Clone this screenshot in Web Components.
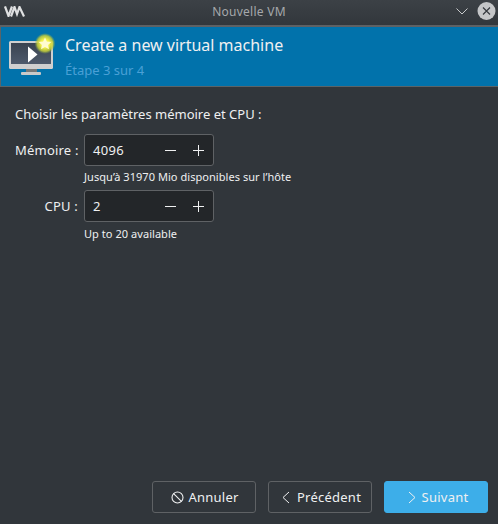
<!DOCTYPE html>
<html><head><meta charset="utf-8"><style>
html,body{margin:0;padding:0;background:#31363b}
body{width:498px;height:524px;overflow:hidden;font:13px "Noto Sans",sans-serif;color:#eff0f1}
</style></head><body>
<vm-window>
  <vm-titlebar slot="title">Nouvelle VM</vm-titlebar>
  <vm-banner slot="banner" heading="Create a new virtual machine" sub="Étape 3 sur 4"></vm-banner>
  <vm-form slot="body"></vm-form>
  <vm-button slot="footer" icon="cancel">Annuler</vm-button>
  <vm-button slot="footer" icon="prev">Précédent</vm-button>
  <vm-button slot="footer" icon="next" primary>Suivant</vm-button>
</vm-window>
<script>
function def(name, html){
  customElements.define(name, class extends HTMLElement{
    connectedCallback(){
      if(this.shadowRoot) return;
      const r=this.attachShadow({mode:'open'});
      r.innerHTML= typeof html==='function'? html(this): html;
    }
  });
}
def('vm-window',`<style>
:host{display:flex;flex-direction:column;width:498px;height:524px;box-sizing:border-box}
.body{flex:1;display:flex;flex-direction:column}
.foot{display:flex;justify-content:flex-end;gap:12px;padding:0 10px 11px 0}
</style><slot name="title"></slot><slot name="banner"></slot><div class="body"><slot name="body"></slot></div><div class="foot"><slot name="footer"></slot></div>`);

def('vm-titlebar',`<style>
:host{display:flex;align-items:center;justify-content:center;position:relative;height:26px;box-sizing:border-box;
background:linear-gradient(#3c4146,#32373c);border-bottom:1px solid #5e6164;color:#a5a8ab;font-size:12px;letter-spacing:.25px}
.logo{position:absolute;left:4px;top:6px}
.ctl{position:absolute;right:2px;top:2px;display:flex;align-items:center;gap:9px}
.t{position:relative;top:-1px}
</style>
<svg class="logo" width="21" height="11" viewBox="0 0 21 11" fill="none" stroke="#dfe0e1" stroke-width="2.200">
<path d="M1 .5l3.500 9.500L8 .5"/><path d="M7 10.500L10.500 1 13 8 15.500 1 20 10.500"/></svg>
<span class="t"><slot></slot></span>
<span class="ctl">
<svg width="12" height="7" viewBox="0 0 12 7" fill="none" stroke="#c8cacc" stroke-width="1"><path d="M.5 .5l5.500 5.500 5.500-5.500"/></svg>
<svg width="19" height="18" viewBox="0 0 19 18"><circle cx="9.500" cy="9" r="9" fill="#c4c6c8"/><path d="M6 5.500l7 7M13 5.500l-7 7" stroke="#34393e" stroke-width="1.200"/></svg>
</span>`);

def('vm-banner',h=>`<style>
:host{display:flex;align-items:center;height:61px;box-sizing:border-box;background:#0172ab;border:1px solid #5a6468;border-top:1px solid #5e6164;border-right:0;padding-left:8px}
.txt{display:flex;flex-direction:column;margin-left:8px}
.h{font-size:16px;color:#eff0f1;line-height:22px;position:relative;top:-1px}
.s{font-size:13px;color:#4aa0d6;line-height:18px;margin-top:4px}
svg{flex:none;overflow:visible}
</style>
<svg width="48" height="48" viewBox="0 5 48 48">
<defs><linearGradient id="sc" x1="0" y1="0" x2="0" y2="1"><stop offset="0" stop-color="#3a4350"/><stop offset="1" stop-color="#4e5a6c"/></linearGradient>
<radialGradient id="gl"><stop offset=".4" stop-color="#f4f24a"/><stop offset=".75" stop-color="#c4ce3a" stop-opacity=".85"/><stop offset="1" stop-color="#7fa850" stop-opacity="0"/></radialGradient></defs>
<rect x="0" y="13" width="44" height="28" rx="1.500" fill="#cfcfcf"/>
<rect x="2" y="15" width="40" height="21" fill="url(#sc)"/>
<rect x="17" y="41" width="11" height="3" fill="#777"/>
<rect x="12" y="44" width="20" height="3" rx="1" fill="#c9c9c9"/>
<path d="M19 18.500v16l9.500-8z" fill="#fff"/>
<circle cx="36" cy="15.500" r="10.500" fill="url(#gl)"/>
<path d="M36 9.500l1.900 4 4.400.5-3.200 3 .9 4.300-4-2.200-4 2.200.9-4.300-3.200-3 4.400-.5z" fill="#fffbd0"/>
</svg>
<div class="txt"><div class="h">${h.getAttribute('heading')}</div><div class="s">${h.getAttribute('sub')}</div></div>`);

def('vm-spin',h=>`<style>
:host{display:inline-flex;align-items:center;width:130px;height:32px;box-sizing:border-box;background:#232629;border:1px solid #5f6265;border-radius:3px;padding:0 8px 0 8px;font-size:13px;color:#eff0f1}
.v{flex:1;letter-spacing:.35px}
svg{display:block}
.b{display:flex;gap:15px}
</style><span class="v">${h.getAttribute('value')}</span><span class="b">
<svg width="13" height="13" viewBox="0 0 13 13" stroke="#eff0f1" stroke-width="1"><path d="M1 6.500h11"/></svg>
<svg width="13" height="13" viewBox="0 0 13 13" stroke="#eff0f1" stroke-width="1"><path d="M1 6.500h11M6.500 1v11"/></svg></span>`);

def('vm-form',`<style>
:host{display:block;padding:18px 0 0 15px;color:#eff0f1;font-size:13px}
.t{line-height:18px;margin-bottom:11px}
.g{display:grid;grid-template-columns:63px auto;column-gap:6px;justify-content:start;align-items:center}
.l{text-align:right;letter-spacing:.2px;white-space:nowrap}
.hint{grid-column:2;font-size:11px;line-height:14px;padding:4px 0 6px;letter-spacing:.05px}
.hint.last{padding-top:5px}
</style>
<div class="t">Choisir les paramètres mémoire et CPU :</div>
<div class="g">
<span class="l">Mémoire :</span><vm-spin value="4096"></vm-spin>
<span class="hint">Jusqu’à 31970 Mio disponibles sur l’hôte</span>
<span class="l">CPU :</span><vm-spin value="2"></vm-spin>
<span class="hint last">Up to 20 available</span>
</div>`);

const icons={
cancel:`<svg width="13" height="13" viewBox="0 0 13 13" fill="none" stroke="#eff0f1" stroke-width="1.100"><circle cx="6.500" cy="6.500" r="5.500"/><path d="M2.600 2.600l7.800 7.800"/></svg>`,
prev:`<svg width="8" height="13" viewBox="0 0 8 13" fill="none" stroke="#eff0f1" stroke-width="1"><path d="M7 1L1 6.500 7 12"/></svg>`,
next:`<svg width="8" height="13" viewBox="0 0 8 13" fill="none" stroke="#eff0f1" stroke-width="1"><path d="M1 1l6 5.500L1 12"/></svg>`};
const btn={cancel:[4,2],prev:[7,3],next:[6,4]};
def('vm-button',h=>{const b=btn[h.getAttribute('icon')];return `<style>
:host{display:inline-flex;align-items:center;justify-content:center;gap:${b[0]}px;width:104px;height:32px;box-sizing:border-box;border-radius:3px;font-size:13px;letter-spacing:.25px;padding-left:${b[1]}px;
border:1px solid ${h.hasAttribute('primary')?'#3daee9':'#5f6265'};background:${h.hasAttribute('primary')?'#3daee9':'#31363b'};color:#eff0f1}
svg{display:block}
</style>${icons[h.getAttribute('icon')]}<span><slot></slot></span>`});
</script>
</body></html>
